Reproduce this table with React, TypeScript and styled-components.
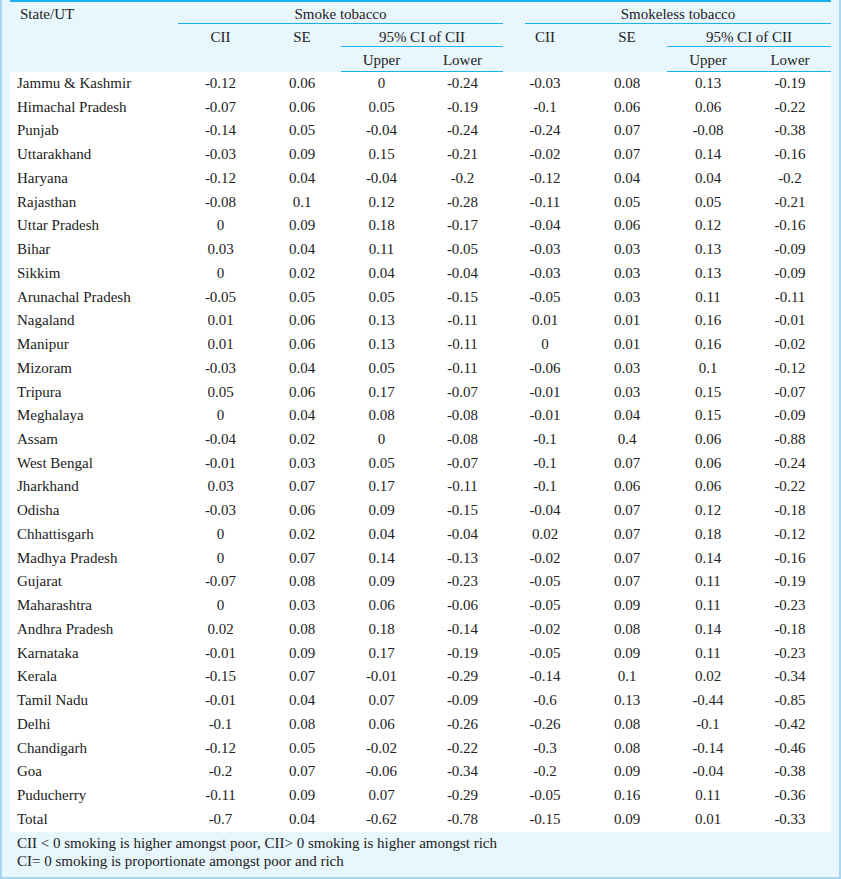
import React from "react";
import styled, { createGlobalStyle } from "styled-components";

const serif = `"Liberation Serif", "DejaVu Serif", "Times New Roman", Times, serif`;

const Global = createGlobalStyle`
  html, body { margin: 0; padding: 0; background: #ffffff; }
  body { font-family: ${serif}; color: #222; }
`;

const Frame = styled.div`
  box-sizing: border-box;
  width: 841px;
  height: 879px;
  background: #e8f6fd;
  border-left: 2px solid #a6d9f0;
  border-right: 2px solid #a6d9f0;
  border-bottom: 2px solid #a6d9f0;
  padding: 0 8px;
  font-family: ${serif};
  color: #222;
`;

const Table = styled.table`
  width: 821px;
  border-collapse: collapse;
  table-layout: fixed;
  border-top: 2px solid #19b2ee;
  font-family: ${serif};
  font-size: 15px;
  color: #222;
`;

const HeadCell = styled.th<{ $align?: string }>`
  font-weight: normal;
  text-align: ${(p) => p.$align || "center"};
  vertical-align: top;
  padding: 0;
  height: 23px;
  line-height: 23px;
`;

const Label = styled.div<{ $line?: boolean; $inset?: number; $padLeft?: number }>`
  margin-left: ${(p) => p.$inset || 0}px;
  padding-left: ${(p) => p.$padLeft || 0}px;
  padding-top: 1px;
  height: 22px;
  box-sizing: border-box;
  line-height: 22px;
  border-bottom: 1px solid ${(p) => (p.$line ? "#19b2ee" : "transparent")};
`;

const Head = styled.thead`
  tr:last-child th { border-bottom: 1px solid #19b2ee; }
`;

const Body = styled.tbody`
  background: #ffffff;
`;

const Cell = styled.td<{ $first?: boolean }>`
  padding: 3px 0 3px ${(p) => (p.$first ? "7px" : "0")};
  line-height: 17.74px;
  text-align: ${(p) => (p.$first ? "left" : "center")};
  white-space: nowrap;
`;

const Note = styled.div`
  padding: 2px 7px 0;
  font-size: 15px;
  line-height: 18px;
`;

const rows: [string, ...string[]][] = [
  ["Jammu & Kashmir", "-0.12", "0.06", "0", "-0.24", "-0.03", "0.08", "0.13", "-0.19"],
  ["Himachal Pradesh", "-0.07", "0.06", "0.05", "-0.19", "-0.1", "0.06", "0.06", "-0.22"],
  ["Punjab", "-0.14", "0.05", "-0.04", "-0.24", "-0.24", "0.07", "-0.08", "-0.38"],
  ["Uttarakhand", "-0.03", "0.09", "0.15", "-0.21", "-0.02", "0.07", "0.14", "-0.16"],
  ["Haryana", "-0.12", "0.04", "-0.04", "-0.2", "-0.12", "0.04", "0.04", "-0.2"],
  ["Rajasthan", "-0.08", "0.1", "0.12", "-0.28", "-0.11", "0.05", "0.05", "-0.21"],
  ["Uttar Pradesh", "0", "0.09", "0.18", "-0.17", "-0.04", "0.06", "0.12", "-0.16"],
  ["Bihar", "0.03", "0.04", "0.11", "-0.05", "-0.03", "0.03", "0.13", "-0.09"],
  ["Sikkim", "0", "0.02", "0.04", "-0.04", "-0.03", "0.03", "0.13", "-0.09"],
  ["Arunachal Pradesh", "-0.05", "0.05", "0.05", "-0.15", "-0.05", "0.03", "0.11", "-0.11"],
  ["Nagaland", "0.01", "0.06", "0.13", "-0.11", "0.01", "0.01", "0.16", "-0.01"],
  ["Manipur", "0.01", "0.06", "0.13", "-0.11", "0", "0.01", "0.16", "-0.02"],
  ["Mizoram", "-0.03", "0.04", "0.05", "-0.11", "-0.06", "0.03", "0.1", "-0.12"],
  ["Tripura", "0.05", "0.06", "0.17", "-0.07", "-0.01", "0.03", "0.15", "-0.07"],
  ["Meghalaya", "0", "0.04", "0.08", "-0.08", "-0.01", "0.04", "0.15", "-0.09"],
  ["Assam", "-0.04", "0.02", "0", "-0.08", "-0.1", "0.4", "0.06", "-0.88"],
  ["West Bengal", "-0.01", "0.03", "0.05", "-0.07", "-0.1", "0.07", "0.06", "-0.24"],
  ["Jharkhand", "0.03", "0.07", "0.17", "-0.11", "-0.1", "0.06", "0.06", "-0.22"],
  ["Odisha", "-0.03", "0.06", "0.09", "-0.15", "-0.04", "0.07", "0.12", "-0.18"],
  ["Chhattisgarh", "0", "0.02", "0.04", "-0.04", "0.02", "0.07", "0.18", "-0.12"],
  ["Madhya Pradesh", "0", "0.07", "0.14", "-0.13", "-0.02", "0.07", "0.14", "-0.16"],
  ["Gujarat", "-0.07", "0.08", "0.09", "-0.23", "-0.05", "0.07", "0.11", "-0.19"],
  ["Maharashtra", "0", "0.03", "0.06", "-0.06", "-0.05", "0.09", "0.11", "-0.23"],
  ["Andhra Pradesh", "0.02", "0.08", "0.18", "-0.14", "-0.02", "0.08", "0.14", "-0.18"],
  ["Karnataka", "-0.01", "0.09", "0.17", "-0.19", "-0.05", "0.09", "0.11", "-0.23"],
  ["Kerala", "-0.15", "0.07", "-0.01", "-0.29", "-0.14", "0.1", "0.02", "-0.34"],
  ["Tamil Nadu", "-0.01", "0.04", "0.07", "-0.09", "-0.6", "0.13", "-0.44", "-0.85"],
  ["Delhi", "-0.1", "0.08", "0.06", "-0.26", "-0.26", "0.08", "-0.1", "-0.42"],
  ["Chandigarh", "-0.12", "0.05", "-0.02", "-0.22", "-0.3", "0.08", "-0.14", "-0.46"],
  ["Goa", "-0.2", "0.07", "-0.06", "-0.34", "-0.2", "0.09", "-0.04", "-0.38"],
  ["Puducherry", "-0.11", "0.09", "0.07", "-0.29", "-0.05", "0.16", "0.11", "-0.36"],
  ["Total", "-0.7", "0.04", "-0.62", "-0.78", "-0.15", "0.09", "0.01", "-0.33"],
];

const widths = [168, 85, 78, 81, 81, 84, 80, 82, 82];

export default function App() {
  return (
    <>
      <Global />
      <Frame>
        <Table>
          <colgroup>
            {widths.map((w, i) => (
              <col key={i} style={{ width: w }} />
            ))}
          </colgroup>
          <Head>
            <tr>
              <HeadCell $align="left" rowSpan={3}>
                <Label $padLeft={10}>State/UT</Label>
              </HeadCell>
              <HeadCell colSpan={4}>
                <Label $line>Smoke tobacco</Label>
              </HeadCell>
              <HeadCell colSpan={4}>
                <Label $line $inset={22}>Smokeless tobacco</Label>
              </HeadCell>
            </tr>
            <tr>
              <HeadCell rowSpan={2}><Label>CII</Label></HeadCell>
              <HeadCell rowSpan={2}><Label>SE</Label></HeadCell>
              <HeadCell colSpan={2}><Label $line>95% CI of CII</Label></HeadCell>
              <HeadCell rowSpan={2}><Label>CII</Label></HeadCell>
              <HeadCell rowSpan={2}><Label>SE</Label></HeadCell>
              <HeadCell colSpan={2}><Label $line>95% CI of CII</Label></HeadCell>
            </tr>
            <tr>
              <HeadCell><Label>Upper</Label></HeadCell>
              <HeadCell><Label>Lower</Label></HeadCell>
              <HeadCell><Label>Upper</Label></HeadCell>
              <HeadCell><Label>Lower</Label></HeadCell>
            </tr>
          </Head>
          <Body>
            {rows.map((r) => (
              <tr key={r[0]}>
                {r.map((v, i) => (
                  <Cell key={i} $first={i === 0}>{v}</Cell>
                ))}
              </tr>
            ))}
          </Body>
        </Table>
        <Note>
          CII &lt; 0 smoking is higher amongst poor, CII&gt; 0 smoking is higher amongst rich
          <br />
          CI= 0 smoking is proportionate amongst poor and rich
        </Note>
      </Frame>
    </>
  );
}
